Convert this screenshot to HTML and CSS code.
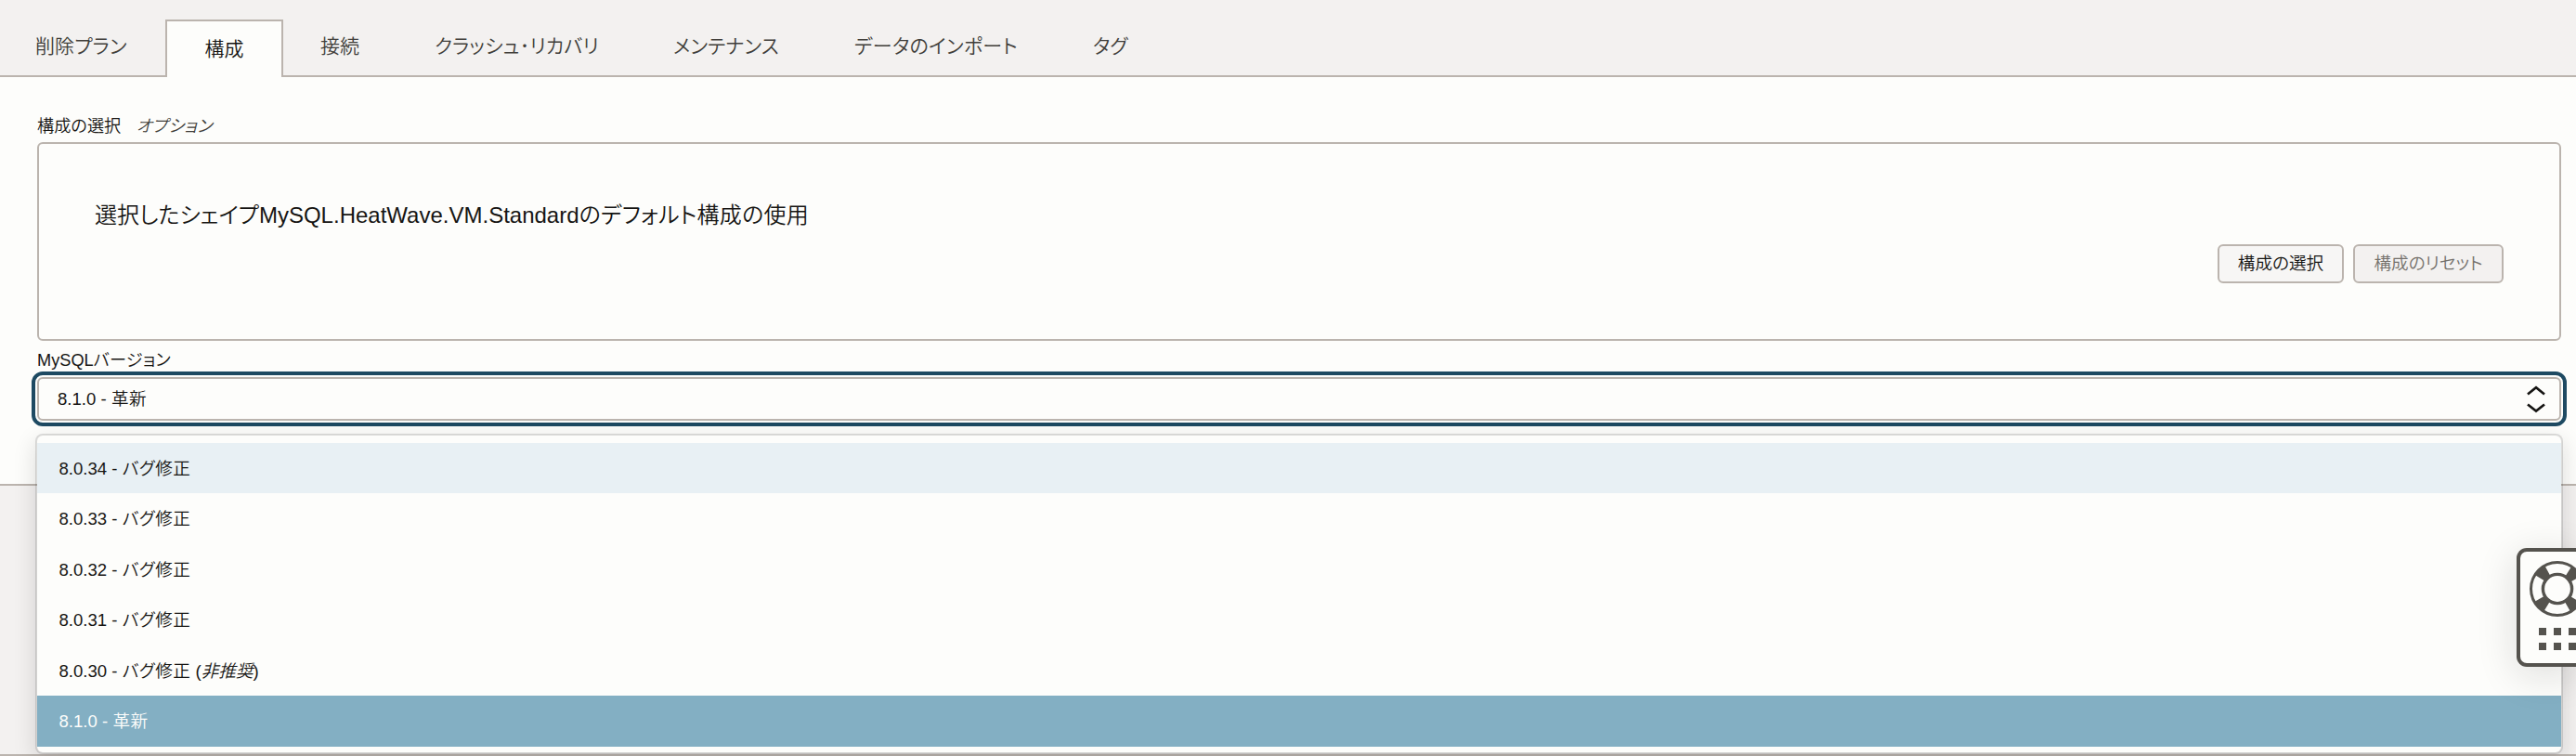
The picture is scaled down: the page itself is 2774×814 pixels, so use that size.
FILE: index.html
```html
<!DOCTYPE html>
<html lang="ja">
<head>
<meta charset="utf-8">
<title>構成</title>
<link rel="stylesheet" href="styles.css">
</head>
<body>
<nav class="tabs">
  <a class="tab tab-plan">削除プラン</a>
  <a class="tab tab-active">構成</a>
  <a class="tab tab-connect">接続</a>
  <a class="tab tab-crash">クラッシュ･リカバリ</a>
  <a class="tab tab-maint">メンテナンス</a>
  <a class="tab tab-import">データのインポート</a>
  <a class="tab tab-tag">タグ</a>
</nav>
<main class="panel">
  <div class="label"><span>構成の選択</span><em class="optional">オプション</em></div>
  <section class="config-box">
    <p class="config-text"><span class="ct-a">選択したシェイプ</span><span class="ct-b">MySQL.HeatWave.VM.Standard</span><span class="ct-c">のデフォルト構成の使用</span></p>
    <div class="actions">
      <button class="btn btn-select">構成の選択</button>
      <button class="btn btn-reset" disabled>構成のリセット</button>
    </div>
  </section>
  <div class="label version-label"><span>MySQL</span><span class="vl-b">バージョン</span></div>
  <div class="select-wrap">
    <div class="select">
      <span class="value">8.1.0 - <span class="cj">革新</span></span>
      <svg class="chevrons" width="20" height="30" viewBox="0 0 20 30" fill="none" stroke="#161513" stroke-width="2.7"><path d="M1 9.5 10 2.2 19 9.5M1 20.5 10 27.5 19 20.5"/></svg>
    </div>
    <ul class="menu">
      <li class="item item-hover">8.0.34 - <span class="cj">バグ修正</span></li>
      <li class="item">8.0.33 - <span class="cj">バグ修正</span></li>
      <li class="item">8.0.32 - <span class="cj">バグ修正</span></li>
      <li class="item">8.0.31 - <span class="cj">バグ修正</span></li>
      <li class="item">8.0.30 - <span class="cj">バグ修正</span> (<em>非推奨</em>)</li>
      <li class="item item-selected">8.1.0 - <span class="cj">革新</span></li>
    </ul>
  </div>
</main>
<footer class="footer"></footer>
<aside class="help">
  <svg width="60" height="104" viewBox="0 0 60 104">
    <g fill="none" stroke="#55534e">
      <circle cx="40" cy="40" r="22.5" stroke-width="13" stroke-dasharray="11.5 23.843" stroke-dashoffset="-11.92"/>
      <circle cx="40" cy="40" r="28.5" stroke-width="3"/>
      <circle cx="40" cy="40" r="15.6" stroke-width="3.4"/>
    </g>
    <path fill="#55534e" d="M20 82h8v8h-8zM36 82h8v8h-8zM52 82h8v8h-8zM20 98h8v8h-8zM36 98h8v8h-8zM52 98h8v8h-8z"/>
  </svg>
</aside>
</body>
</html>
```
FILE: styles.css
```css
* { box-sizing: border-box; }
html, body { margin: 0; padding: 0; }
body {
  position: relative;
  width: 2774px;
  height: 814px;
  overflow: hidden;
  display: flex;
  flex-direction: column;
  background: #fdfdfb;
  color: #161513;
  font-family: "Liberation Sans", "Noto Sans CJK JP", sans-serif;
  font-size: 18.6px;
  font-weight: 350;
  font-feature-settings: "palt";
}
.tabs {
  display: flex;
  height: 83px;
  padding-top: 21px;
  background: #f3f1f0;
  box-shadow: inset 0 -2px #bbb4ae;
  font-size: 21px;
  color: #403e3a;
}
.tab {
  padding: 0 41px;
  line-height: 58px;
  white-space: nowrap;
}
.tab-plan { width: 178px; padding-left: 38px; padding-right: 0; letter-spacing: .1px; }
.tab-active {
  width: 127px;
  height: 62px;
  padding: 0;
  text-align: center;
  line-height: 59px;
  color: #161513;
  background: #fdfdfb;
  border: 2px solid #bbb4ae;
  border-bottom: 0;
}
.tab-connect { width: 122px; padding-left: 40px; }
.tab-crash { width: 257px; letter-spacing: .2px; }
.tab-maint { width: 195px; letter-spacing: .1px; }
.tab-import { width: 257px; letter-spacing: .3px; }
.panel {
  height: 440px;
  padding: 40px 16px 0 40px;
  border-bottom: 2px solid #bbb4ae;
}
.label {
  display: flex;
  height: 30px;
  line-height: 27px;
  font-size: 18.2px;
  white-space: nowrap;
}
.optional { margin-left: 16.5px; color: #403e3a; letter-spacing: .4px; }
.config-box {
  display: flex;
  flex-direction: column;
  height: 214px;
  padding: 60px 60px 0;
  border: 2px solid #bbb4ae;
  border-radius: 6px;
}
.config-text { margin: 0; height: 48px; line-height: 33px; font-size: 24px; white-space: nowrap; }
.ct-a { letter-spacing: .08px; }
.ct-c { letter-spacing: .28px; }
.actions { display: flex; justify-content: flex-end; gap: 10px; }
.btn {
  height: 42px;
  padding: 0;
  border: 2px solid #bbb4ae;
  border-radius: 6px;
  background: #f7f6f5;
  color: #161513;
  font: inherit;
  font-feature-settings: inherit;
  line-height: 36px;
}
.btn-select { width: 136px; }
.btn-reset { width: 162px; background: #f3f1f0; color: #75716c; }
.version-label { height: 39px; line-height: 43px; }
.vl-b { letter-spacing: .2px; }
.select-wrap { position: relative; }
.select {
  display: flex;
  align-items: center;
  justify-content: space-between;
  height: 47px;
  padding: 0 15px 0 20px;
  border: 2px solid #bbb4ae;
  border-radius: 6px;
  outline: 4px solid #1e4a62;
  outline-offset: 2px;
}
.value { padding-bottom: 5px; }
.cj { letter-spacing: .5px; }
.menu {
  position: absolute;
  z-index: 1;
  top: 61px;
  left: -2px;
  right: -2px;
  height: 345px;
  margin: 0;
  padding: 8px 0 0;
  list-style: none;
  background: #fdfdfb;
  border: 2px solid rgba(22, 21, 19, .14);
  border-radius: 8px;
  background-clip: padding-box;
  box-shadow: 0 8px 24px rgba(22, 21, 19, .14);
}
.item { height: 54.4px; padding-left: 23.5px; line-height: 55px; white-space: nowrap; }
.item-hover { background: #e8f0f4; }
.item-selected { height: 55px; background: #83afc3; color: #fdfdfb; }
.footer {
  flex: 1;
  background: #f3f1f0;
  border-bottom: 2px solid #bbb4ae;
}
.help {
  position: absolute;
  z-index: 2;
  top: 590px;
  right: 0;
  width: 64px;
  height: 128px;
  border: 4px solid #55534e;
  border-right: 0;
  border-radius: 11px 0 0 11px;
  background: #fdfdfb;
  box-shadow: 0 8px 44px rgba(22, 21, 19, .14);
}
.help svg { display: block; overflow: visible; }
```
